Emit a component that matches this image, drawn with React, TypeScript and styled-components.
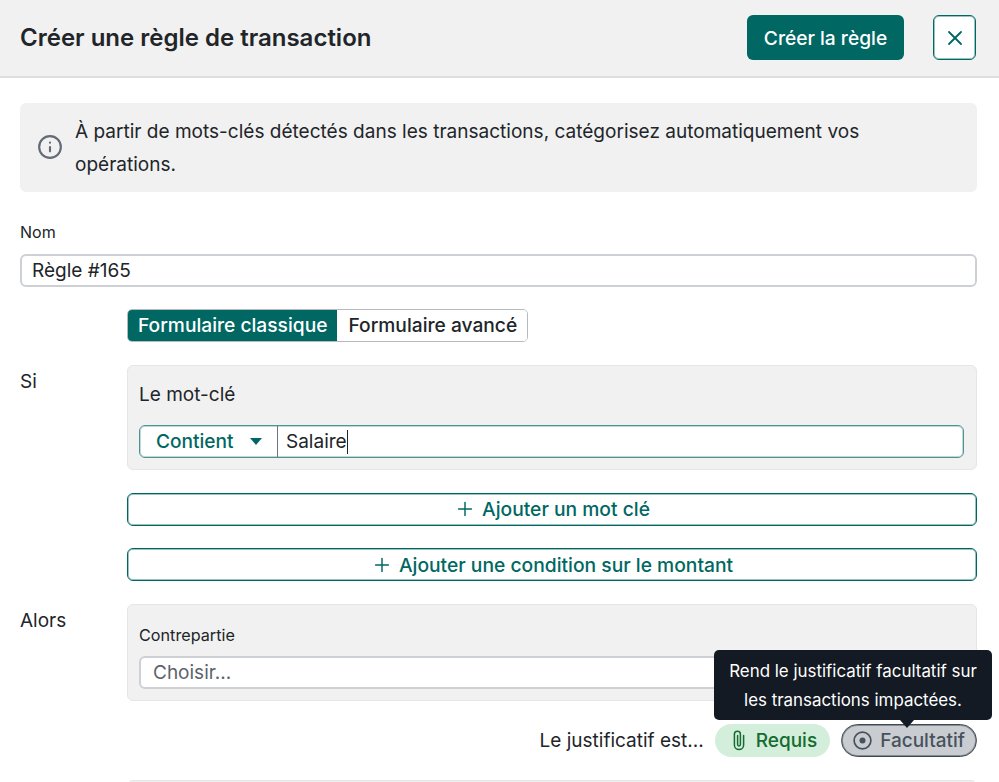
import styled, { createGlobalStyle } from "styled-components";
import { Info, X, Plus } from "lucide-react";

const GlobalStyle = createGlobalStyle`
  html, body {
    margin: 0;
    padding: 0;
    height: 782px;
    overflow: hidden;
    background: #fff;
    font-family: Inter, "Noto Sans", sans-serif;
    color: #212529;
  }
  * {
    box-sizing: border-box;
  }
`;

const TEAL = "#006763";

function App() {
  return (
    <>
      <GlobalStyle />
      <Header>
        <Title>Créer une règle de transaction</Title>
        <PrimaryButton>Créer la règle</PrimaryButton>
        <CloseButton aria-label="Fermer">
          <X size={24} strokeWidth={1.8} />
        </CloseButton>
      </Header>

      <Body>
        <InfoBox>
          <InfoIcon>
            <Info size={26} strokeWidth={2} />
          </InfoIcon>
          <InfoText>
            À partir de mots-clés détectés dans les transactions, catégorisez automatiquement vos opérations.
          </InfoText>
        </InfoBox>

        <FieldLabel>Nom</FieldLabel>
        <NameInput>Règle #165</NameInput>

        <Tabs>
          <Tab $active>Formulaire classique</Tab>
          <Tab>Formulaire avancé</Tab>
        </Tabs>

        <Section>
          <SectionLabel>Si</SectionLabel>
          <SectionContent>
            <Panel>
              <PanelTitle>Le mot-clé</PanelTitle>
              <KeywordGroup>
                <KeywordSelect>
                  Contient
                  <Caret />
                </KeywordSelect>
                <KeywordValue>
                  Salaire
                  <TextCursor />
                </KeywordValue>
              </KeywordGroup>
            </Panel>
            <AddButton>
              <Plus size={22} strokeWidth={1.6} />
              Ajouter un mot clé
            </AddButton>
            <AddButton>
              <Plus size={22} strokeWidth={1.6} />
              Ajouter une condition sur le montant
            </AddButton>
          </SectionContent>
        </Section>

        <Section>
          <SectionLabel>Alors</SectionLabel>
          <SectionContent>
            <ThenPanel>
              <SmallLabel>Contrepartie</SmallLabel>
              <ChooseInput>Choisir...</ChooseInput>
            </ThenPanel>
            <ReceiptRow>
              <ReceiptLabel>Le justificatif est...</ReceiptLabel>
              <RequiredPill>
                <svg width="12" height="21" viewBox="0 0 12 21" fill="none">
                  <path
                    d="M10.6 5.5V15a4.6 4.6 0 0 1-9.2 0V4.2a3 3 0 0 1 6 0V14.5a1.4 1.4 0 0 1-2.8 0V5.5"
                    stroke="currentColor"
                    strokeWidth="1.5"
                    strokeLinecap="round"
                  />
                </svg>
                Requis
              </RequiredPill>
              <OptionalPill>
                <Tooltip>
                  Rend le justificatif facultatif sur
                  <br />
                  les transactions impactées.
                </Tooltip>
                <svg width="19" height="19" viewBox="0 0 19 19" fill="none">
                  <circle cx="9.5" cy="9.5" r="8.4" stroke="currentColor" strokeWidth="1.7" />
                  <circle cx="9.5" cy="9.5" r="3" fill="currentColor" />
                </svg>
                Facultatif
              </OptionalPill>
            </ReceiptRow>
            <NextPanel />
          </SectionContent>
        </Section>
      </Body>
    </>
  );
}

const Header = styled.header`
  display: flex;
  align-items: center;
  height: 78px;
  padding: 0 23px 1px 20px;
  background: #f1f1f1;
  border-bottom: 2px solid #dfdfdf;
`;

const Title = styled.h1`
  flex: 1;
  margin: 0;
  font-size: 24px;
  font-weight: 600;
  color: #212529;
`;

const PrimaryButton = styled.button`
  width: 157px;
  height: 45px;
  margin-right: 29px;
  border: none;
  border-radius: 6px;
  background: ${TEAL};
  color: #fff;
  font: 450 19.2px Inter, sans-serif;
`;

const CloseButton = styled.button`
  display: flex;
  align-items: center;
  justify-content: center;
  width: 43px;
  height: 45px;
  padding: 0;
  border: 1px solid ${TEAL};
  border-radius: 6px;
  background: #fff;
  box-shadow: inset 0 0 0 1px rgba(0, 103, 99, 0.4);
  color: ${TEAL};
`;

const Body = styled.main`
  padding: 25px 22px 0 20px;
`;

const InfoBox = styled.div`
  display: flex;
  align-items: center;
  height: 89px;
  padding: 0 80px 0 17px;
  border-radius: 6px;
  background: #f1f1f1;
`;

const InfoIcon = styled.span`
  display: flex;
  margin: 0 12px 1px 0;
  color: #636b76;
`;

const InfoText = styled.p`
  margin: 0;
  font-size: 19.05px;
  line-height: 33px;
`;

const FieldLabel = styled.div`
  margin-top: 30px;
  font-size: 16px;
  line-height: 20px;
`;

const NameInput = styled.div`
  height: 33px;
  margin-top: 12px;
  padding-left: 10px;
  border: 2px solid #cdd1d5;
  border-radius: 6px;
  font-size: 19px;
  line-height: 30px;
`;

const Tabs = styled.div`
  display: inline-flex;
  margin: 22px 0 0 107px;
  border: 1px solid #b4babf;
  border-radius: 5px;
  overflow: hidden;
  vertical-align: top;
`;

const Tab = styled.div<{ $active?: boolean }>`
  height: 31px;
  padding: 0 ${(p) => (p.$active ? "10px" : "10px 0 11px")};
  background: ${(p) => (p.$active ? TEAL : "#fff")};
  color: ${(p) => (p.$active ? "#fff" : "#212529")};
  font-size: 19.2px;
  font-weight: 450;
  line-height: 31px;
`;

const Section = styled.section`
  display: flex;
  margin-top: 23px;
`;

const SectionLabel = styled.div`
  width: 107px;
  padding-top: 5px;
  font-size: 19px;
  line-height: 23px;
`;

const SectionContent = styled.div`
  flex: 1;
  min-width: 0;
`;

const Panel = styled.div`
  height: 105px;
  padding: 17px 12px 0 11px;
  border: 1px solid #e6e6e6;
  border-radius: 6px;
  background: #f1f1f1;
`;

const PanelTitle = styled.div`
  font-size: 19px;
  line-height: 24px;
`;

const KeywordGroup = styled.div`
  display: flex;
  height: 33px;
  margin-top: 18px;
  border: 1px solid #4f9491;
  border-radius: 6px;
  background: #fff;
  box-shadow: inset 0 0 0 1px rgba(0, 103, 99, 0.25);
  overflow: hidden;
`;

const KeywordSelect = styled.div`
  display: flex;
  align-items: center;
  width: 138px;
  padding: 0 0 1px 16px;
  border-right: 1px solid #6c757d;
  color: ${TEAL};
  font-size: 19.1px;
  font-weight: 450;
`;

const Caret = styled.span`
  margin-left: 16px;
  border-top: 7px solid ${TEAL};
  border-left: 6px solid transparent;
  border-right: 6px solid transparent;
`;

const KeywordValue = styled.div`
  display: flex;
  align-items: center;
  padding-left: 8px;
  font-size: 19px;
`;

const TextCursor = styled.span`
  width: 1px;
  height: 24px;
  background: #212529;
`;

const AddButton = styled.button`
  display: flex;
  align-items: center;
  justify-content: center;
  gap: 6px;
  width: 100%;
  height: 33px;
  margin-top: 23px;
  padding: 0 0 1px;
  border: 1px solid ${TEAL};
  border-radius: 6px;
  background: #fff;
  box-shadow: inset 0 0 0 1px rgba(0, 103, 99, 0.4);
  color: ${TEAL};
  font: 450 19.25px Inter, sans-serif;

  & + & {
    margin-top: 22px;
    padding: 1px 0 0;
  }
`;

const ThenPanel = styled.div`
  height: 97px;
  padding: 20px 12px 0 11px;
  border: 1px solid #e6e6e6;
  border-radius: 6px;
  background: #f1f1f1;
`;

const SmallLabel = styled.div`
  font-size: 16.2px;
  line-height: 20px;
`;

const ChooseInput = styled.div`
  height: 33px;
  margin-top: 11px;
  padding-left: 12px;
  border: 2px solid #cdd1d5;
  border-radius: 6px;
  background: #fff;
  color: #5c636a;
  font-size: 19px;
  line-height: 29px;
`;

const ReceiptRow = styled.div`
  display: flex;
  align-items: center;
  justify-content: flex-end;
  height: 33px;
  margin-top: 23px;
`;

const ReceiptLabel = styled.span`
  margin-right: 11px;
  font-size: 19px;
`;

const Pill = styled.div`
  display: flex;
  align-items: center;
  height: 33px;
  border-radius: 17px;
  font-size: 19px;
  font-weight: 450;
`;

const RequiredPill = styled(Pill)`
  gap: 11px;
  padding: 0 13px 0 18px;
  margin-right: 11px;
  background: #d3eedb;
  color: #146c2e;
`;

const OptionalPill = styled(Pill)`
  position: relative;
  gap: 8px;
  padding: 0 11px 0 11px;
  border: 1px solid #3f4953;
  background: #c9cdd2;
  box-shadow: inset 0 0 0 1px rgba(63, 73, 83, 0.5);
  color: #48525c;
`;

const Tooltip = styled.div`
  position: absolute;
  right: -16px;
  bottom: 36px;
  width: 278px;
  height: 70px;
  padding-top: 7px;
  border-radius: 5px;
  background: #141a23;
  color: #fff;
  font-size: 16.9px;
  font-weight: 400;
  line-height: 29px;
  text-align: center;

  &::after {
    content: "";
    position: absolute;
    right: 78px;
    bottom: -8px;
    border-top: 8px solid #141a23;
    border-left: 7px solid transparent;
    border-right: 7px solid transparent;
  }
`;

const NextPanel = styled.div`
  height: 40px;
  margin-top: 23px;
  border: 1px solid #e6e6e6;
  border-radius: 6px;
  background: #f1f1f1;
`;

export default App;
